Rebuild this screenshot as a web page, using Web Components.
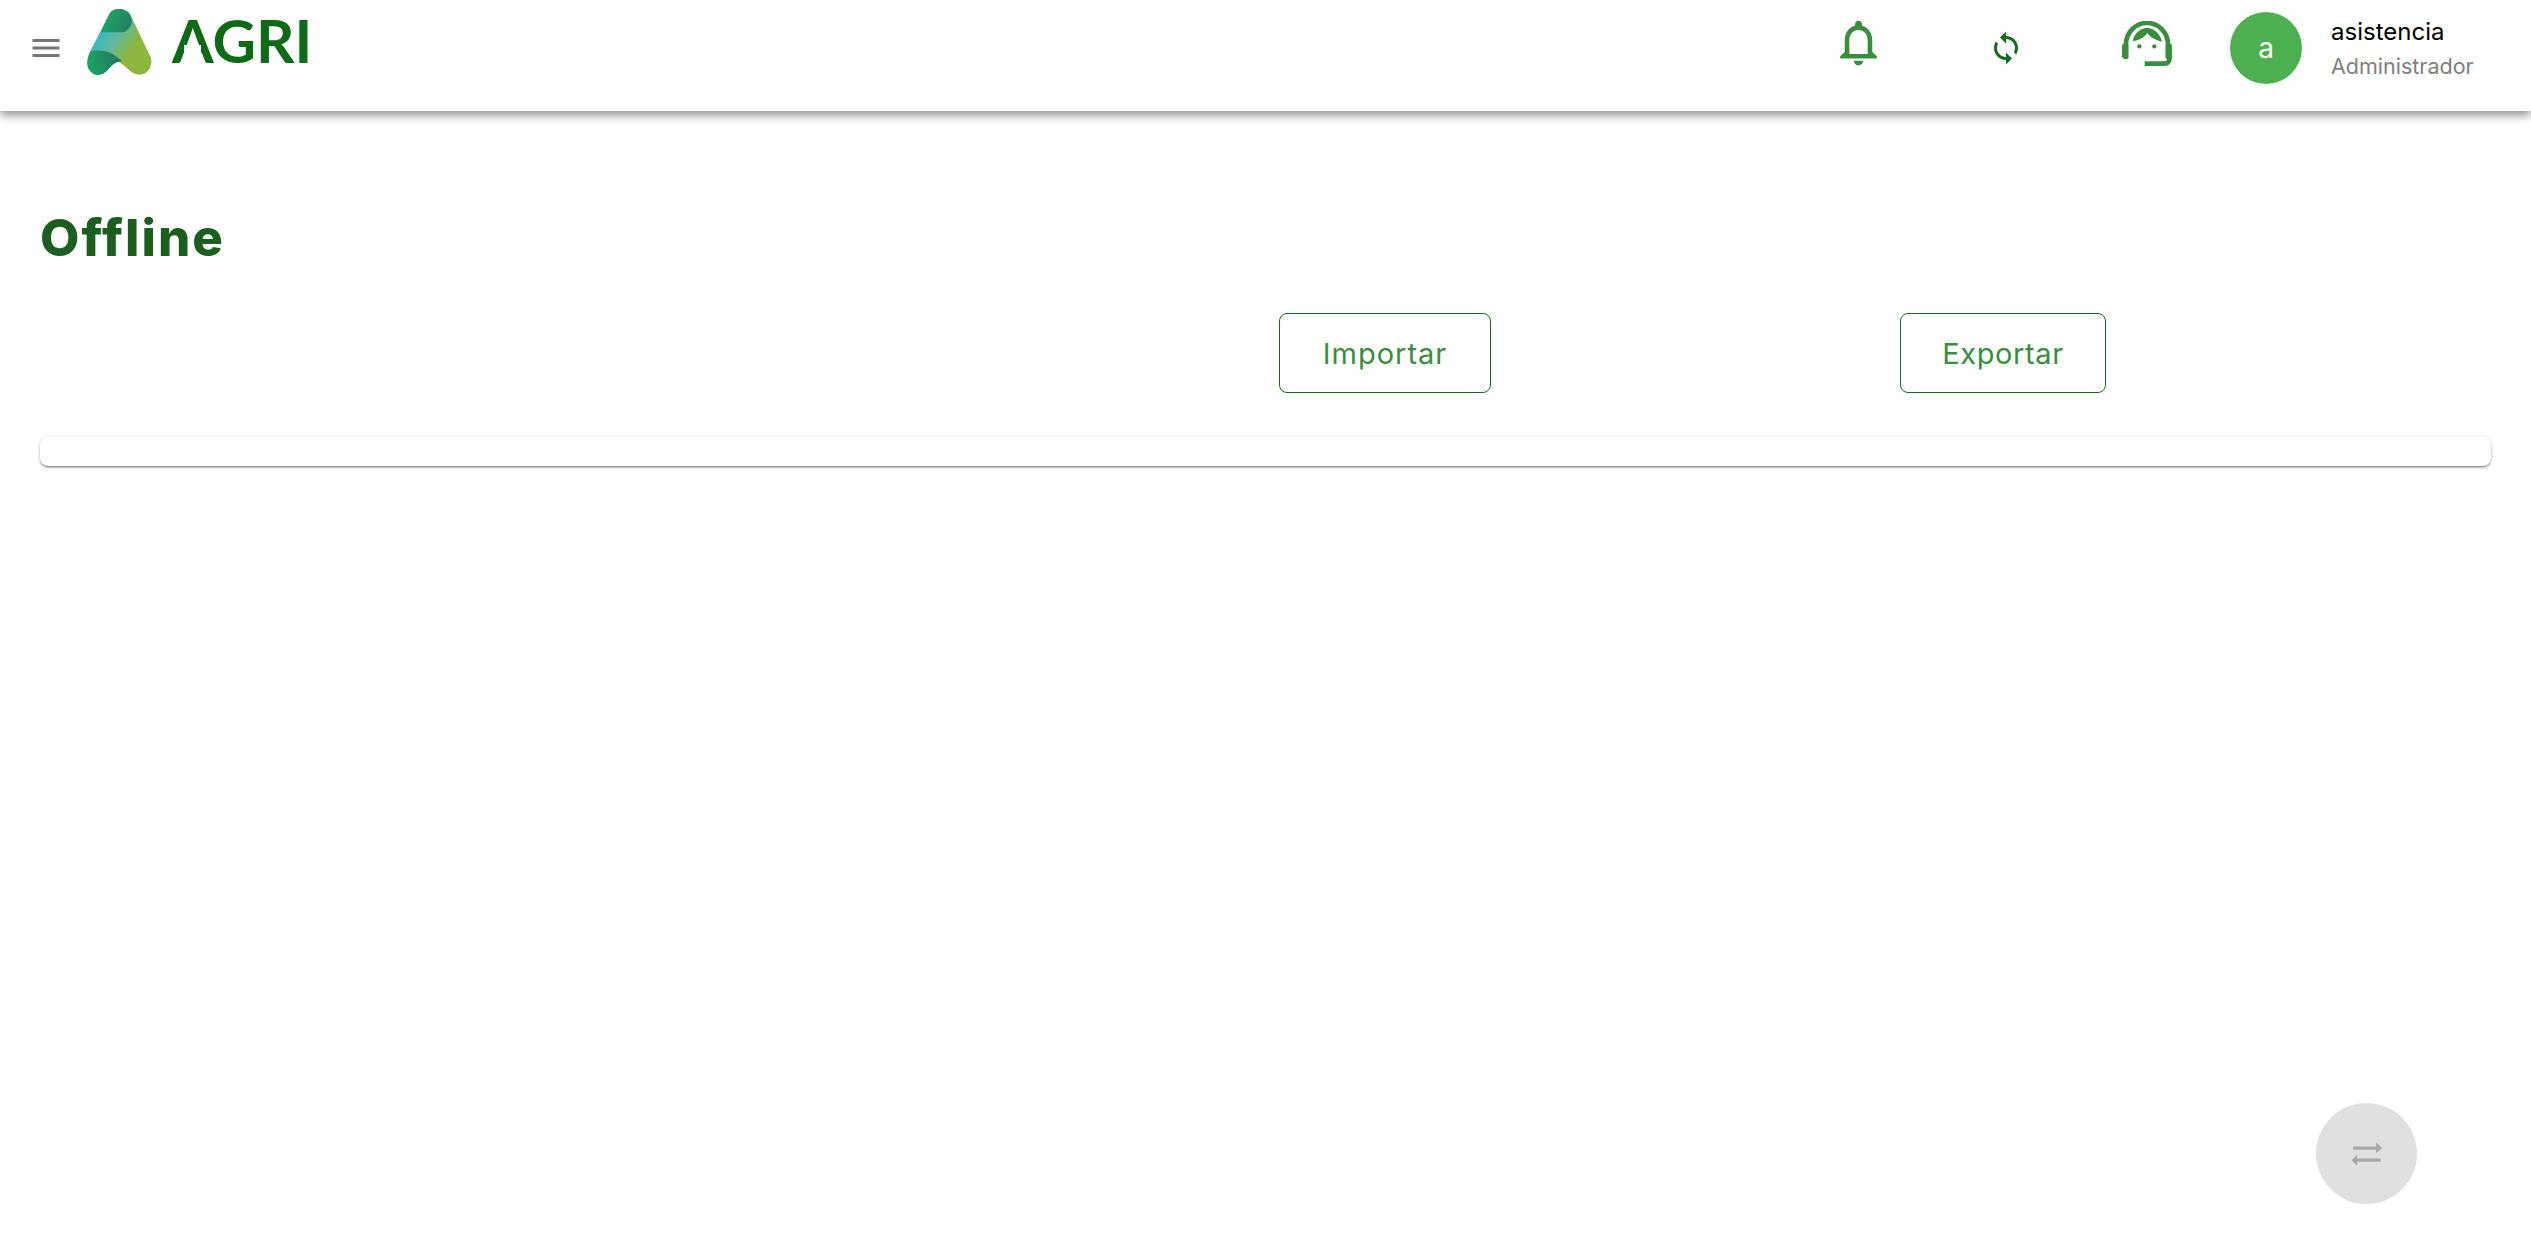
<!DOCTYPE html>
<html lang="es">
<head>
<meta charset="utf-8">
<title>Offline</title>
<style>
html,body{margin:0;padding:0;background:#fff;height:100%}
body{font-family:Inter,"Liberation Sans",sans-serif;overflow:hidden}
</style>
</head>
<body>
<agri-app></agri-app>
<script>
function def(name, html){
  customElements.define(name, class extends HTMLElement{
    constructor(){super();this.attachShadow({mode:'open'}).innerHTML=html;}
  });
}
def('agri-logo',`<style>
:host{display:flex;align-items:flex-start}
svg{display:block;width:80px;height:80px;flex:none}
.word{position:relative;display:block;margin:10px 0 0 12px;font:700 60px/60px Lato,"Liberation Sans",sans-serif;color:#0d6b18;white-space:nowrap}
.bar{position:absolute;left:12px;top:35px;width:17px;height:12px;background:#fff}
</style>
<svg viewBox="0 0 240 240" aria-hidden="true">
<defs>
<linearGradient id="b" gradientUnits="userSpaceOnUse" x1="70" y1="110" x2="150" y2="160"><stop offset="0" stop-color="#42b9b9"/><stop offset=".35" stop-color="#5fb8a0"/><stop offset="1" stop-color="#8db63c"/></linearGradient>
<linearGradient id="t" gradientUnits="userSpaceOnUse" x1="80" y1="50" x2="155" y2="80"><stop offset="0" stop-color="#1fa362"/><stop offset="1" stop-color="#217d64"/></linearGradient>
<linearGradient id="l" gradientUnits="userSpaceOnUse" x1="30" y1="190" x2="110" y2="170"><stop offset="0" stop-color="#1ea161"/><stop offset="1" stop-color="#217a62"/></linearGradient>
</defs>
<path fill="url(#b)" d="M88 42C95 30 105 27 120 27C135 27 148 38 155 52L212 172C220 195 205 224 180 224C165 224 155 218 145 208C130 195 118 185 110 184C100 185 95 195 85 208C75 220 65 225 55 225C35 225 20 205 22 185C23 175 26 165 30 155Z"/>
<path fill="url(#t)" d="M62 97L88 42C95 30 105 27 120 27C140 27 155 42 155 62C155 82 140 97 122 97Z"/>
<path fill="url(#l)" d="M30 155C45 150 70 150 90 158C105 165 115 175 127 183C112 183 95 195 85 208C75 220 65 225 55 225C35 225 20 205 22 185C23 175 26 165 30 155Z"/>
</svg>
<span class="word">AGRI<i class="bar"></i></span>`);

def('agri-user',`<style>
:host{display:flex;align-items:flex-start;color:#000}
.av{width:72px;height:72px;border-radius:50%;background:#4caf50;color:#fff;display:flex;align-items:center;justify-content:center;font:400 28px/1 Inter,"Liberation Sans",sans-serif;flex:none}
.tx{margin-left:29px;display:flex;flex-direction:column}
.n{font:400 24px/30px Inter,"Liberation Sans",sans-serif;margin-top:5px}
.r{font:400 21.5px/28px Inter,"Liberation Sans",sans-serif;color:#7f7f7f;margin-top:5px}
</style>
<div class="av">a</div><div class="tx"><span class="n">asistencia</span><span class="r">Administrador</span></div>`);

def('agri-header',`<style>
:host{display:flex;align-items:flex-start;height:111px;background:#fff;position:relative;z-index:2;box-shadow:0 4px 9px rgba(0,0,0,.45)}
svg{display:block;flex:none}
.menu{width:36px;height:36px;margin:30px 0 0 28px;fill:#757575}
agri-logo{margin:0 0 0 16px}
.sp{flex:1}
.bell{width:55px;height:55px;margin:15px 0 0 0;fill:#388e3c}
.sync{width:36px;height:36px;margin:30px 0 0 102px;fill:#146c1e}
.head{width:50px;height:45px;margin:21px 0 0 98px}
agri-user{margin:12px 0 0 58px;width:301px}
</style>
<svg class="menu" viewBox="0 0 24 24"><path d="M3 18h18v-2H3v2zm0-5h18v-2H3v2zm0-7v2h18V6H3z"/></svg>
<agri-logo></agri-logo>
<div class="sp"></div>
<svg class="bell" viewBox="0 0 24 24"><path d="M12 22c1.1 0 2-.9 2-2h-4c0 1.1.89 2 2 2zm6-6v-5c0-3.07-1.64-5.64-4.5-6.32V4c0-.83-.67-1.5-1.5-1.5s-1.5.67-1.5 1.5v.68C7.63 5.36 6 7.92 6 11v5l-2 2v1h16v-1l-2-2zm-2 1H8v-6c0-2.48 1.51-4.5 4-4.5s4 2.02 4 4.5v6z"/></svg>
<svg class="sync" viewBox="0 0 24 24"><path d="M12 4V1L8 5l4 4V6c3.31 0 6 2.69 6 6 0 1.01-.25 1.97-.7 2.8l1.46 1.46C19.54 15.03 20 13.57 20 12c0-4.42-3.58-8-8-8zm0 14c-3.31 0-6-2.69-6-6 0-1.01.25-1.97.7-2.8L5.24 7.74C4.46 8.97 4 10.43 4 12c0 4.42 3.58 8 8 8v3l4-4-4-4v3z"/></svg>
<svg class="head" viewBox="0 0 150 135"><g fill="#388e3c"><path fill="none" stroke="#388e3c" stroke-width="14" d="M12 113V70A63 64 0 0 1 138 70V113"/><rect x="0" y="68" width="19" height="45" rx="7"/><rect x="131" y="68" width="19" height="45" rx="7"/><path fill="none" stroke="#388e3c" stroke-width="14" d="M143 108Q143 128 126 128H68"/><path d="M32 60C36 38 54 22 75 20C97 22 115 38 120 62C100 57 84 49 76 36C66 51 50 58 32 60Z"/><circle cx="52" cy="76" r="6.5"/><circle cx="97" cy="76" r="6.5"/></g></svg>
<agri-user></agri-user>`);

def('page-title',`<style>
:host{display:block}
h1{margin:0;font:800 51px/58px Inter,"Liberation Sans",sans-serif;color:#1b5e20;letter-spacing:2px}
</style><h1><slot></slot></h1>`);

def('outline-button',`<style>
:host{display:inline-flex}
button{all:unset;box-sizing:border-box;height:80px;width:var(--w,212px);border:1px solid #146c1e;border-radius:8px;display:flex;align-items:center;justify-content:center;font:400 29px/1 Inter,"Liberation Sans",sans-serif;color:#388e3c;letter-spacing:var(--ls,1px);background:#fff}
</style><button><slot></slot></button>`);

def('agri-card',`<style>
:host{display:block;height:29px;border-radius:8px;background:#fff;box-shadow:0 2px 3px -1px rgba(0,0,0,.5),0 1px 1px rgba(0,0,0,.12),0 0 4px rgba(0,0,0,.1)}
</style>`);

def('swap-fab',`<style>
:host{position:fixed;left:2316px;top:1103px;width:101px;height:101px;border-radius:50%;background:#e0e0e0;display:flex;align-items:center;justify-content:center}
svg{width:36px;height:28px;fill:#a8a8a8}
</style><svg viewBox="2348.5 1139.5 36 28"><path d="M2352.7 1146H2375.5V1141.7L2381.7 1147.6L2375.5 1152.7V1149.3H2352.7Z"/><path d="M2380 1158H2356.7V1154.3L2351 1159.7L2356.7 1165.3V1161.3H2380Z"/></svg>`);

def('agri-app',`<style>
:host{display:block}
main{padding:98px 40px 0}
.row{display:grid;grid-template-columns:1036px 618px 618px 1fr;margin-top:46px}
.c{display:flex;justify-content:center}
.e{--w:206px;--ls:.6px}
agri-card{margin-top:44px}
</style>
<agri-header></agri-header>
<main>
<page-title>Offline</page-title>
<div class="row"><div></div>
<div class="c"><outline-button>Importar</outline-button></div>
<div class="c"><outline-button class="e">Exportar</outline-button></div>
<div></div></div>
<agri-card></agri-card>
</main>
<swap-fab></swap-fab>`);
</script>
</body>
</html>
